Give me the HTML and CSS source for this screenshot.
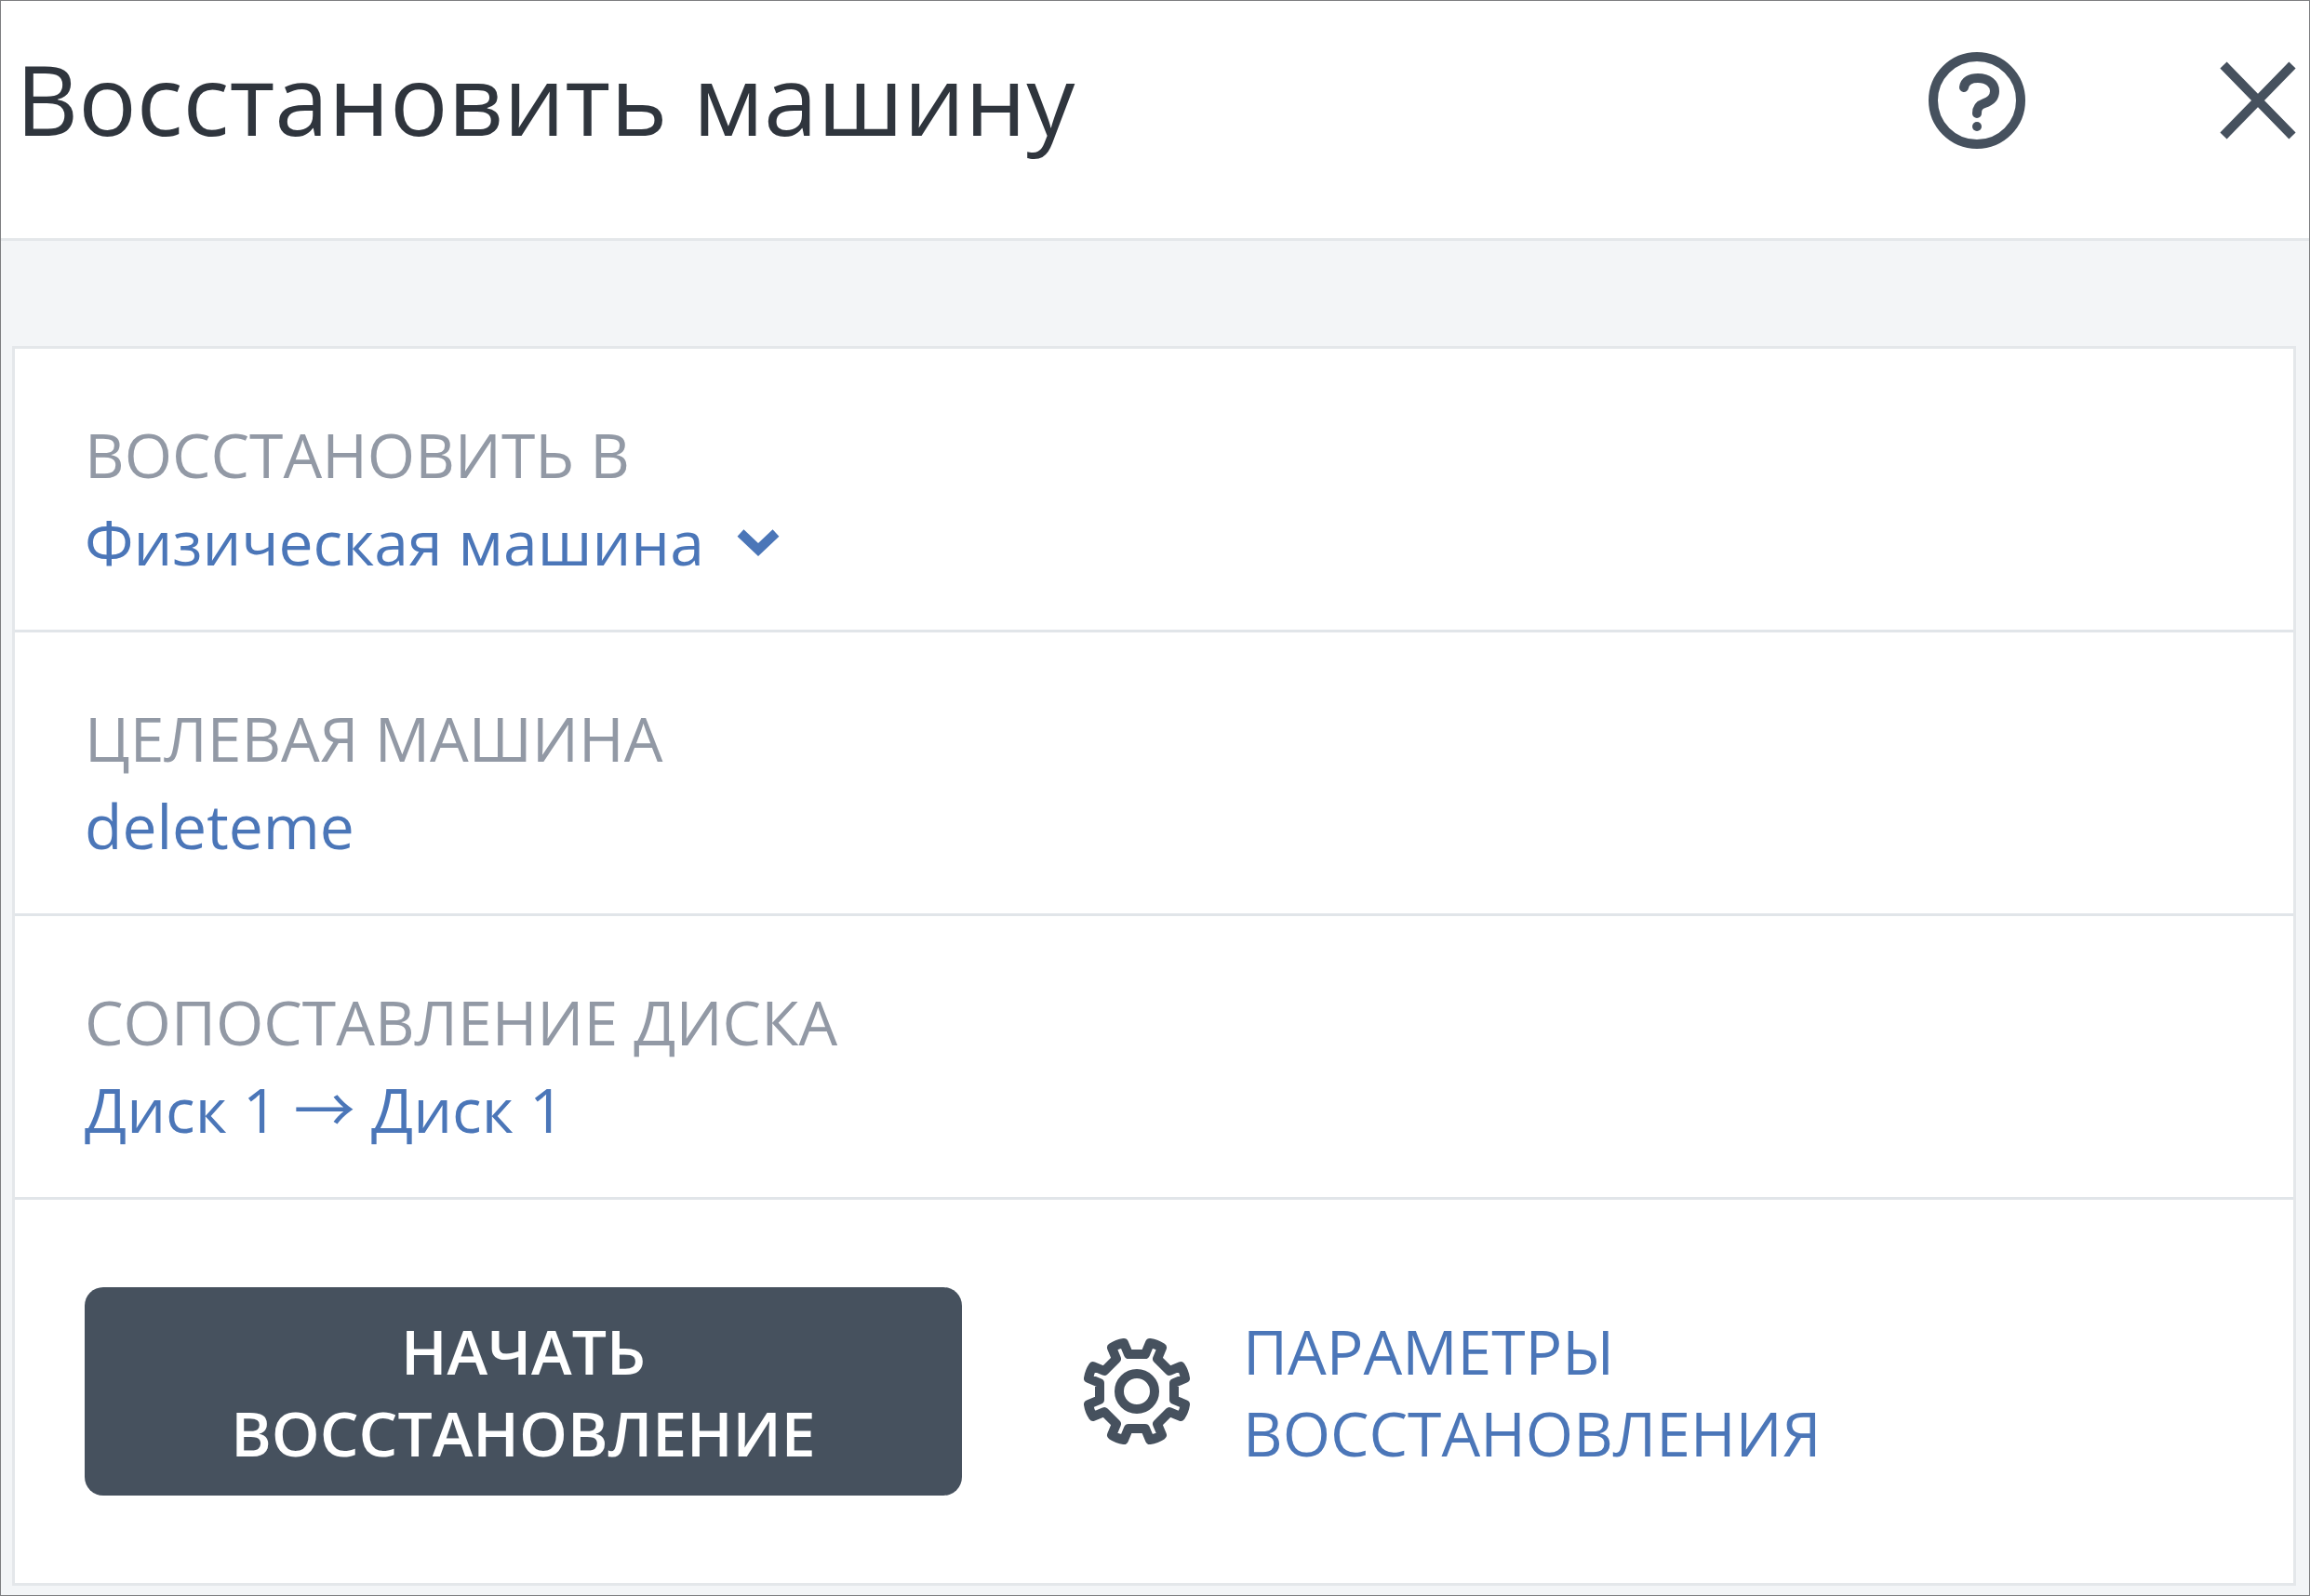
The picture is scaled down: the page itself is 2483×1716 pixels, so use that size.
FILE: index.html
```html
<!DOCTYPE html>
<html lang="ru">
<head>
    <meta charset="UTF-8">
    <title>Восстановить машину</title>
    <link rel="stylesheet" href="styles.css">
</head>

<body>
    <header class="header">
        <h1 class="title">Восстановить машину</h1>
        <div class="header-buttons">
            <button class="icon-btn" type="button" aria-label="Справка">
                <svg class="icon" width="104" height="104" viewBox="-52 -52 104 104">
                    <circle r="47" />
                    <path d="M-14 -14C-13 -21 -7 -24 1 -24C12 -24 19 -18 19 -10C19 -3 14 1 8 3C2 5 0 8 0 14" stroke-linecap="round" />
                    <circle class="dot" cy="28" r="5" />
                </svg>
            </button>
            <button class="icon-btn" type="button" aria-label="Закрыть">
                <svg class="icon" width="84" height="84" viewBox="-42 -42 84 84">
                    <path d="M-37 -38L37 38M37 -38L-37 38" />
                </svg>
            </button>
        </div>
    </header>

    <main class="card">
        <div class="row">
            <label class="label" for="target-type">Восстановить в</label>
            <div class="select-wrap">
                <select class="value select" id="target-type">
                    <option>Физическая машина</option>
                </select>
                <svg class="chevron" width="48" height="34" viewBox="0 0 48 34">
                    <path d="M5 8L24 26L43 8" />
                </svg>
            </div>
        </div>
        <div class="row">
            <div class="label">Целевая машина</div>
            <a class="value" href="#">deleteme</a>
        </div>
        <div class="row">
            <div class="label">Сопоставление диска</div>
            <a class="value" href="#">Диск 1 <span class="arrow">→</span> Диск 1</a>
        </div>
        <div class="actions">
            <button class="start-btn" type="button">Начать восстановление</button>
            <a class="options" href="#">
                <svg class="icon" width="116" height="116" viewBox="-58 -58 116 116">
                    <path stroke-linejoin="round" d="M-14 -52L-9 -40H9L14 -52Q21 -51 27 -47L22 -35L35 -22L47 -27Q51 -21 52 -14L40 -9V9L52 14Q51 21 47 27L35 22L22 35L27 47Q21 51 14 52L9 40H-9L-14 52Q-21 51 -27 47L-22 35L-35 22L-47 27Q-51 21 -52 14L-40 9V-9L-52 -14Q-51 -21 -47 -27L-35 -22L-22 -35L-27 -47Q-21 -51 -14 -52Z" />
                    <circle r="19" />
                </svg>
                <span class="options-text">Параметры восстановления</span>
            </a>
        </div>
    </main>
</body>
</html>
```
FILE: styles.css
```css
* { box-sizing: border-box; }
body {
    margin: 0;
    min-height: 100vh;
    border: 1px solid #7d7e80;
    background: #f3f5f7;
    color: #2f353d;
    font-family: "Open Sans", "Noto Sans", sans-serif;
    font-size: 66px;
    line-height: 94px;
}
.header {
    display: flex;
    justify-content: space-between;
    align-items: center;
    padding: 33px 13px 78px 16px;
    background: white;
    border-bottom: 3px solid #e4e7ea;
}
.title {
    margin: 0;
    font-size: 104px;
    font-weight: 400;
    line-height: 144px;
}
.header-buttons {
    display: flex;
    align-items: center;
    gap: 208px;
    padding-top: 4px;
}
.icon-btn {
    display: flex;
    padding: 0;
    border: none;
    background: none;
}
.icon {
    flex: none;
    fill: none;
    stroke: #46515e;
    stroke-width: 10px;
}
.dot { fill: #46515e; stroke: none; }

.card {
    margin: 113px 14px 10px 12px;
    background: white;
    border: 3px solid #e4e7ea;
}
.row {
    padding: 66px 75px 48px 75px;
    border-bottom: 3px solid #e1e5e9;
}
.label {
    display: block;
    color: #9299a5;
    text-transform: uppercase;
}
.value {
    display: block;
    color: #4b76b8;
    text-decoration: none;
}
.select-wrap {
    display: flex;
    align-items: center;
    gap: 34px;
}
.select {
    appearance: none;
    height: 94px;
    padding: 0;
    border: none;
    background: none;
    font: inherit;
}
.chevron {
    fill: none;
    stroke: #4b76b8;
    stroke-width: 10px;
}
.arrow { font-family: "Noto Sans CJK JP", sans-serif; line-height: 1; }

.actions {
    display: flex;
    align-items: center;
    gap: 130px;
    padding: 94px 75px;
    line-height: 88px;
    text-transform: uppercase;
}
.start-btn {
    width: 943px;
    padding: 24px 120px;
    border: none;
    border-radius: 20px;
    background: #46515e;
    color: white;
    font: inherit;
    font-weight: 600;
    text-transform: inherit;
}
.options {
    display: flex;
    align-items: center;
    gap: 56px;
    color: #4b76b8;
    text-decoration: none;
}
.options-text { width: 700px; }
```
